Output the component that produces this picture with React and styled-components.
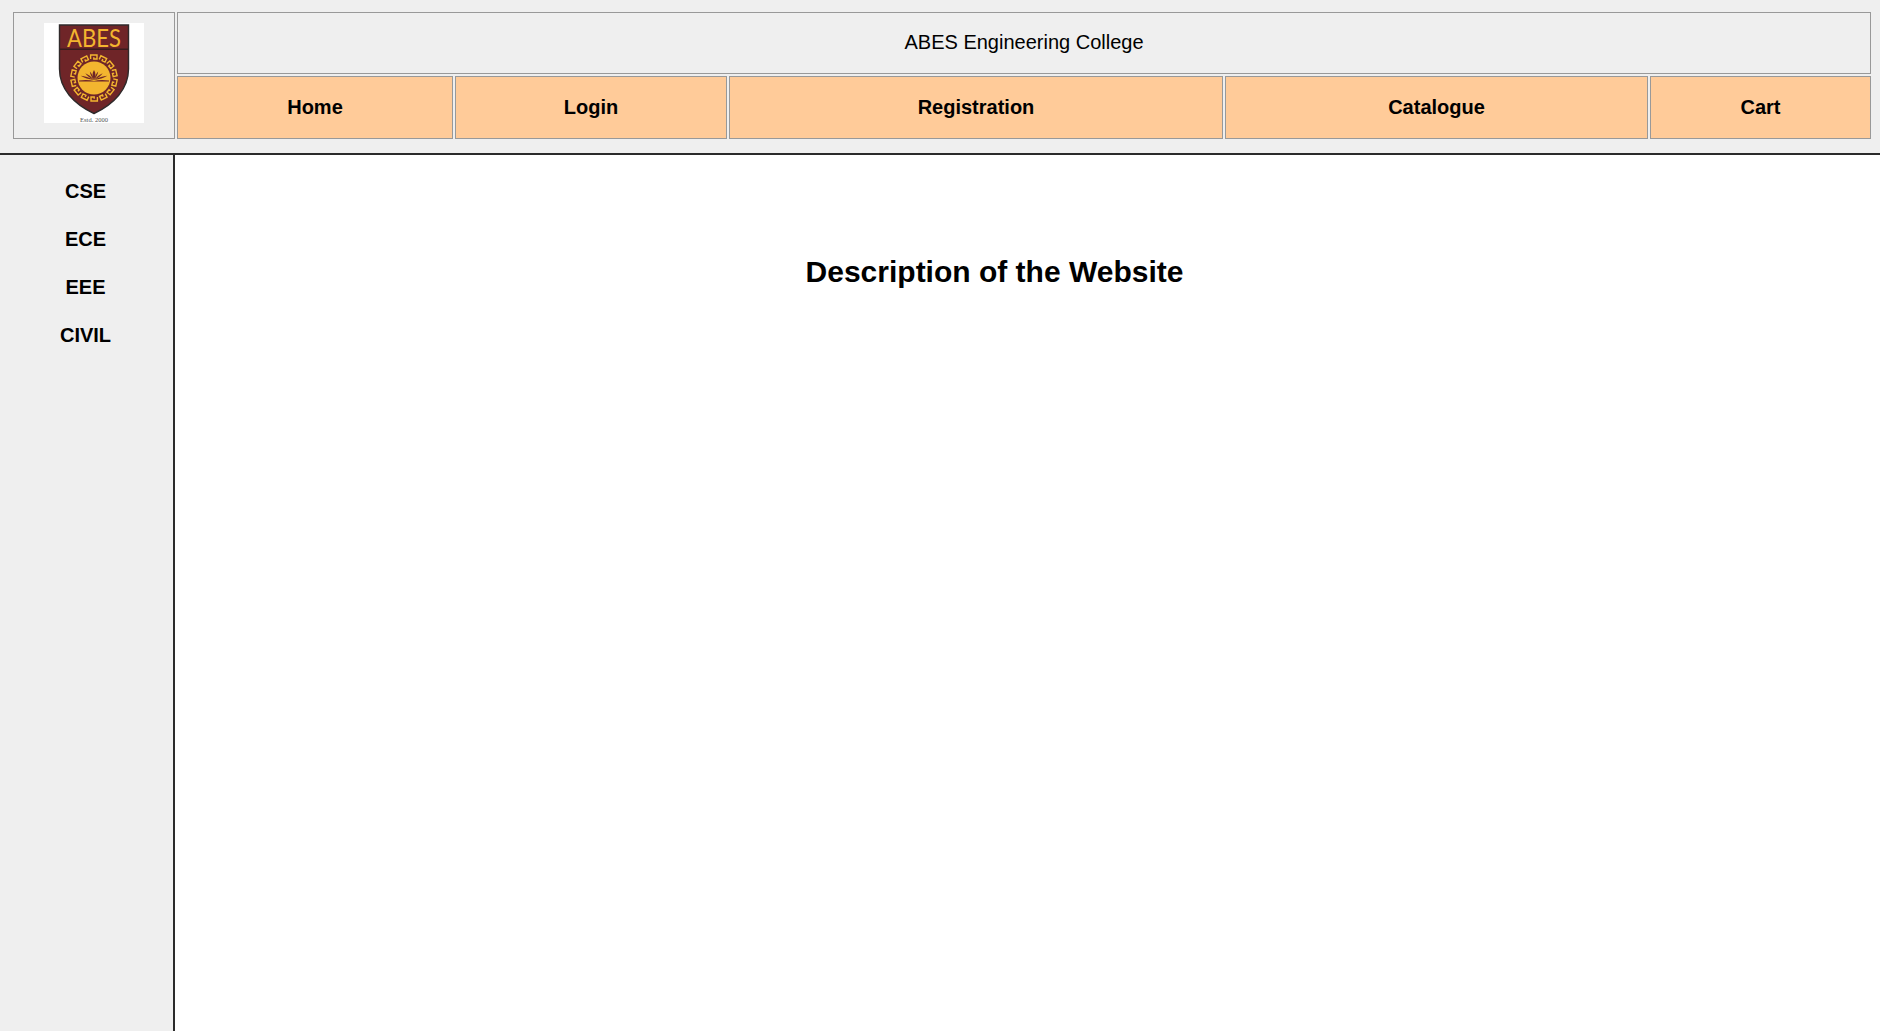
import React from 'react';
import styled, { createGlobalStyle } from 'styled-components';

const GlobalStyle = createGlobalStyle`
  html, body {
    margin: 0;
    padding: 0;
    height: 100%;
    background: #fff;
    font-family: "Liberation Sans", Arial, sans-serif;
    color: #000;
  }
`;

const Page = styled.div`
  height: 100vh;
  display: flex;
  flex-direction: column;
  overflow: hidden;
`;

const Header = styled.header`
  box-sizing: border-box;
  height: 155px;
  flex: none;
  padding: 12px 9px 0 13px;
  background: #efefef;
  border-bottom: 2px solid #2b2b2b;
`;

const HeaderGrid = styled.div`
  display: grid;
  grid-template-columns: 162px 276px 272px 494px 423px 221px;
  grid-template-rows: 62px 63px;
  gap: 2px;
`;

const LogoCell = styled.div`
  grid-row: 1 / span 2;
  box-sizing: border-box;
  border: 1px solid #999;
  padding-top: 10px;
  display: flex;
  align-items: flex-start;
  justify-content: center;
`;

const TitleCell = styled.div`
  grid-column: 2 / span 5;
  box-sizing: border-box;
  border: 1px solid #999;
  display: flex;
  align-items: center;
  justify-content: center;
  font-size: 20px;
  padding-bottom: 2px;
`;

const NavCell = styled.a`
  box-sizing: border-box;
  border: 1px solid #999;
  background: #ffcb99;
  display: flex;
  align-items: center;
  justify-content: center;
  font-size: 20px;
  font-weight: bold;
  color: #000;
  text-decoration: none;
`;

const Body = styled.div`
  flex: 1;
  display: flex;
  min-height: 0;
`;

const Sidebar = styled.aside`
  box-sizing: border-box;
  width: 175px;
  flex: none;
  padding: 12px 2px 0 0;
  background: #efefef;
  border-right: 2px solid #2b2b2b;
  display: flex;
  flex-direction: column;
`;

const SideLink = styled.a`
  height: 48px;
  display: flex;
  align-items: center;
  justify-content: center;
  font-size: 20px;
  font-weight: bold;
  color: #000;
  text-decoration: none;
`;

const Main = styled.main`
  flex: 1;
  padding: 0 66px 0 0;
`;

const Heading = styled.h1`
  margin: 0;
  padding-top: 98px;
  font-size: 30px;
  line-height: 37px;
  font-weight: bold;
  text-align: center;
`;

const LogoImage = styled.svg`
  width: 100px;
  height: 100px;
  display: block;
  background: #fff;
`;

const RING_ANGLES = Array.from({ length: 14 }, (_, i) => (i * 360) / 14);
const PETALS = [
  { angle: -72, len: 14 },
  { angle: -52, len: 11 },
  { angle: -26, len: 9.5 },
  { angle: 26, len: 9.5 },
  { angle: 52, len: 11 },
  { angle: 72, len: 14 },
];

function Logo() {
  return (
    <LogoImage viewBox="0 0 100 100" role="img" aria-label="ABES logo">
      <path
        d="M15.5 2H84.5V46C84.5 66 70 81 50 90.5C30 81 15.5 66 15.5 46Z"
        fill="#6f2528"
        stroke="#2f2a2b"
        strokeWidth="1.4"
      />
      <path d="M16 26.3H84" stroke="#3a1c1e" strokeWidth="1.6" />
      <text
        x="50"
        y="24"
        textAnchor="middle"
        fontFamily="Lato, sans-serif"
        fontSize="25"
        textLength="54"
        lengthAdjust="spacingAndGlyphs"
        fill="#f3b52f"
      >
        ABES
      </text>
      <circle cx="50" cy="55" r="16.5" fill="#f3b52f" />
      {RING_ANGLES.map((a) => (
        <path
          key={a}
          transform={`rotate(${a} 50 55)`}
          d="M46.6 36V32H53V36H49.8V34.2"
          fill="none"
          stroke="#f3b52f"
          strokeWidth="1.4"
        />
      ))}
      {PETALS.map(({ angle, len }) => (
        <path
          key={angle}
          transform={`rotate(${angle} 50 57)`}
          d={`M50 57C49.1 ${57 - len * 0.4} 49.1 ${57 - len * 0.7} 50 ${57 - len}C50.9 ${57 - len * 0.7} 50.9 ${57 - len * 0.4} 50 57Z`}
          fill="#6f2528"
        />
      ))}
      <path d="M50 56.5C48 53 48.2 50 50 47C51.8 50 52 53 50 56.5Z" fill="#6f2528" />
      <path d="M35 57.6C41 56.6 46 57 50 58C54 57 59 56.6 65 57.6V58.4H35Z" fill="#6f2528" />
      <text
        x="50"
        y="99"
        textAnchor="middle"
        fontFamily='"Liberation Serif", serif'
        fontSize="6.5"
        fill="#555"
      >
        Estd. 2000
      </text>
    </LogoImage>
  );
}

const navItems = ['Home', 'Login', 'Registration', 'Catalogue', 'Cart'];
const branches = ['CSE', 'ECE', 'EEE', 'CIVIL'];

export default function App() {
  return (
    <Page>
      <GlobalStyle />
      <Header>
        <HeaderGrid>
          <LogoCell>
            <Logo />
          </LogoCell>
          <TitleCell>ABES Engineering College</TitleCell>
          {navItems.map((item) => (
            <NavCell key={item} href="#">
              {item}
            </NavCell>
          ))}
        </HeaderGrid>
      </Header>
      <Body>
        <Sidebar>
          {branches.map((branch) => (
            <SideLink key={branch} href="#">
              {branch}
            </SideLink>
          ))}
        </Sidebar>
        <Main>
          <Heading>Description of the Website</Heading>
        </Main>
      </Body>
    </Page>
  );
}
